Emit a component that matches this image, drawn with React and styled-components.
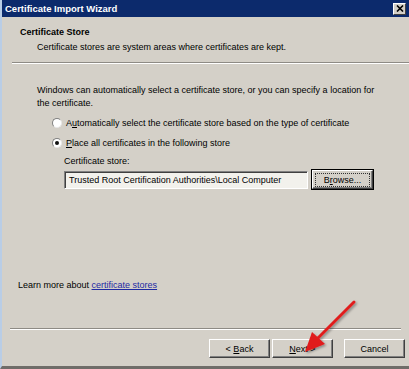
import React from "react";
import styled, { createGlobalStyle } from "styled-components";

const Global = createGlobalStyle`
  html, body { margin: 0; padding: 0; background: #d4d0c8; }
  body { font-family: "Liberation Sans", Arial, sans-serif; }
`;

const Window = styled.div`
  position: relative;
  width: 409px;
  height: 369px;
  box-sizing: border-box;
  background: #d4d0c8;
  border-left: 2px solid #b9cde6;
  border-bottom: 3px solid #6f6d69;
  display: flex;
  flex-direction: column;
  overflow: hidden;
  font-size: 9px;
  color: #000;
`;

const TitleBar = styled.div`
  height: 17px;
  background: #0c2a6c;
  display: flex;
  align-items: center;
  justify-content: space-between;
  padding: 0 3px 0 3px;
  flex-shrink: 0;
`;

const Title = styled.span`
  color: #fff;
  font-weight: bold;
  font-size: 9.5px;
`;

const CloseBtn = styled.div`
  width: 13px;
  height: 12px;
  box-sizing: border-box;
  background: #d4d0c8;
  border: 1px solid;
  border-color: #fff #404040 #404040 #fff;
  display: flex;
  align-items: center;
  justify-content: center;
`;

const Header = styled.div`
  height: 45px;
  padding: 10px 0 0 18px;
  box-sizing: border-box;
  display: flex;
  flex-direction: column;
  gap: 5px;
  flex-shrink: 0;
`;

const HeaderTitle = styled.div`
  font-weight: bold;
  font-size: 9px;
`;

const HeaderSub = styled.div`
  padding-left: 17px;
`;

const Separator = styled.div`
  height: 0;
  border-top: 1px solid #8e8b85;
  border-bottom: 1px solid #fff;
  margin: ${(p) => p.$margin};
  flex-shrink: 0;
`;

const Content = styled.div`
  flex: 1;
  display: flex;
  flex-direction: column;
  padding: 20px 0 0 35px;
`;

const Para = styled.p`
  margin: 0;
  line-height: 13px;
  width: 350px;
`;

const RadioRow = styled.label`
  display: flex;
  align-items: center;
  gap: 4px;
  margin-left: 15px;
  margin-top: ${(p) => p.$mt}px;
  height: 12px;
`;

const Radio = styled.span`
  width: 10px;
  height: 10px;
  border-radius: 50%;
  box-sizing: border-box;
  border: 1px solid;
  border-color: #808080 #e8e8e8 #e8e8e8 #808080;
  background: #fff;
  display: flex;
  align-items: center;
  justify-content: center;
  &::after {
    content: "";
    width: 4px;
    height: 4px;
    border-radius: 50%;
    background: ${(p) => (p.$checked ? "#111" : "transparent")};
  }
`;

const U = styled.span`
  text-decoration: underline;
`;

const StoreBlock = styled.div`
  margin-left: 27px;
  margin-top: 7px;
  display: flex;
  flex-direction: column;
  gap: 4px;
`;

const StoreRow = styled.div`
  display: flex;
  align-items: center;
  gap: 4px;
`;

const StoreInput = styled.div`
  width: 244px;
  height: 18px;
  box-sizing: border-box;
  border: 1px solid;
  border-color: #808080 #fff #fff #808080;
  box-shadow: inset 1px 1px 0 #404040;
  background: #f2f1ec;
  display: flex;
  align-items: center;
  padding-left: 4px;
  white-space: nowrap;
  overflow: hidden;
`;

const Button = styled.div`
  width: ${(p) => p.$w}px;
  height: ${(p) => p.$h}px;
  box-sizing: border-box;
  border: 1px solid;
  border-color: #fff #404040 #404040 #fff;
  box-shadow: inset -1px -1px 0 #808080;
  background: #d4d0c8;
  display: flex;
  align-items: center;
  justify-content: center;
  white-space: pre;
  ${(p) =>
    p.$default &&
    `
    outline: 1px solid #000;
    outline-offset: 0;
  `}
`;

const Focus = styled.span`
  border: 1px dotted #333;
  padding: 1px 8px;
`;

const Learn = styled.div`
  margin-top: auto;
  margin-left: -19px;
  margin-bottom: 38px;
`;

const Link = styled.span`
  color: #1e2aa3;
  text-decoration: underline;
`;

const Footer = styled.div`
  height: 36px;
  display: flex;
  padding: 9px 0 0 207px;
  box-sizing: border-box;
  gap: 2px;
  flex-shrink: 0;
`;

const Gap = styled.div`
  width: 7px;
`;

const Arrow = styled.svg`
  position: absolute;
  left: 296px;
  top: 296px;
  pointer-events: none;
`;

export default function App() {
  return (
    <>
      <Global />
      <Window>
        <TitleBar>
          <Title>Certificate Import Wizard</Title>
          <CloseBtn>
            <svg width="8" height="7" viewBox="0 0 8 7">
              <path d="M1 0.5 L7 6.5 M7 0.5 L1 6.5" stroke="#000" strokeWidth="1.6" />
            </svg>
          </CloseBtn>
        </TitleBar>
        <Header>
          <HeaderTitle>Certificate Store</HeaderTitle>
          <HeaderSub>Certificate stores are system areas where certificates are kept.</HeaderSub>
        </Header>
        <Separator $margin="0 0 0 10px" />
        <Content>
          <Para>
            Windows can automatically select a certificate store, or you can specify a location for
            the certificate.
          </Para>
          <RadioRow $mt={7}>
            <Radio />
            <span>
              A<U>u</U>tomatically select the certificate store based on the type of certificate
            </span>
          </RadioRow>
          <RadioRow $mt={8}>
            <Radio $checked />
            <span>
              <U>P</U>lace all certificates in the following store
            </span>
          </RadioRow>
          <StoreBlock>
            <span>Certificate store:</span>
            <StoreRow>
              <StoreInput>Trusted Root Certification Authorities\Local Computer</StoreInput>
              <Button $w={61} $h={19} $default>
                <Focus>
                  B<U>r</U>owse...
                </Focus>
              </Button>
            </StoreRow>
          </StoreBlock>
          <Learn>
            Learn more about <Link>certificate stores</Link>
          </Learn>
        </Content>
        <Separator $margin="0 8px 0 8px" />
        <Footer>
          <Button $w={61} $h={19}>
            {"< "}
            <U>B</U>ack
          </Button>
          <Button $w={61} $h={19}>
            <U>N</U>
            {"ext >"}
          </Button>
          <Gap />
          <Button $w={61} $h={19}>Cancel</Button>
        </Footer>
        <Arrow width="70" height="62" viewBox="0 0 70 62">
          <defs>
            <filter id="sh" x="-20%" y="-20%" width="140%" height="140%">
              <feDropShadow dx="1.5" dy="1.5" stdDeviation="1" floodColor="#000" floodOpacity="0.35" />
            </filter>
          </defs>
          <g filter="url(#sh)">
            <path d="M56 6 L18 44" stroke="#e01b1b" strokeWidth="3" strokeLinecap="round" />
            <path d="M7 56 L14 36 L27 48 Z" fill="#e01b1b" />
          </g>
        </Arrow>
      </Window>
    </>
  );
}
